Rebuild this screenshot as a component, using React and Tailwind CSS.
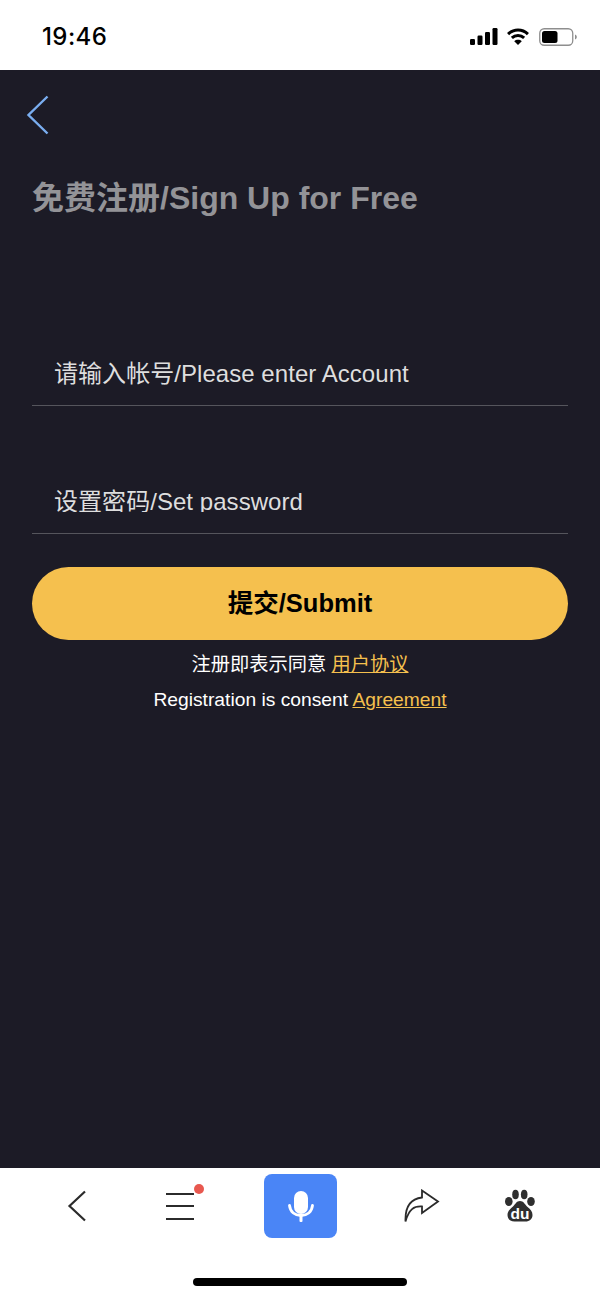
const sans = "font-['Liberation_Sans','Noto_Sans_CJK_SC',sans-serif]";

function StatusIcons() {
  return (
    <div className="flex items-center gap-[8px]">
      <svg width="28" height="17" viewBox="0 0 28 17" fill="#000">
        <rect x="0" y="11" width="5" height="6" rx="1.2" />
        <rect x="7.5" y="7.5" width="5" height="9.5" rx="1.2" />
        <rect x="15" y="4" width="5" height="13" rx="1.2" />
        <rect x="22.5" y="0" width="5" height="17" rx="1.2" />
      </svg>
      <svg width="24" height="17" viewBox="0 0 24 18" fill="none" stroke="#000" strokeWidth="3.2">
        <path d="M1.5 6.5C7.5 .8 16.5 .8 22.5 6.5" />
        <path d="M5.5 10.5C9.2 7 14.8 7 18.5 10.5" />
        <path d="M12 18l-4-4c2.2-2 5.800-2 8 0z" fill="#000" stroke="none" />
      </svg>
      <svg width="38" height="18" viewBox="0 0 38 18" className="ml-[1px]">
        <rect x="0.75" y="0.75" width="33" height="16.5" rx="4.5" fill="none" stroke="#8e8e8e" strokeWidth="1.3" />
        <rect x="3" y="3" width="15.5" height="12" rx="2.5" fill="#000" />
        <path d="M36 6.5c1.300.4 1.800 1.300 1.800 2.500s-.5 2.100-1.800 2.500z" fill="#8e8e8e" />
      </svg>
    </div>
  );
}

function BottomBar() {
  return (
    <div className="h-[131px] bg-white shrink-0 flex flex-col items-center">
      <div className="w-full h-[78px] flex items-center pb-[2px]">
        <div className="w-[87px] flex justify-end shrink-0">
          <svg width="20" height="32" viewBox="0 0 20 32" fill="none" stroke="#2b2b2b" strokeWidth="2.2">
            <path d="M18 1.500 2.500 16 18 30.500" />
          </svg>
        </div>
        <div className="relative w-[28px] ml-[79px] flex flex-col gap-[10.5px] shrink-0">
          <div className="h-[2px] bg-[#2b2b2b]" />
          <div className="h-[2px] bg-[#2b2b2b]" />
          <div className="h-[2px] bg-[#2b2b2b]" />
          <div className="absolute right-[-10px] top-[-9px] w-[10px] h-[10px] rounded-full bg-[#e8584f]" />
        </div>
        <div className="ml-[70px] w-[73px] h-[64px] rounded-[8px] bg-[#4a85f6] flex items-center justify-center shrink-0">
          <svg width="26" height="31" viewBox="0 0 26 31" fill="#fff">
            <rect x="6" y="0" width="14" height="23" rx="7" />
            <path d="M1.500 14.500c.8 6.500 5.500 10 11.500 10s10.700-3.500 11.500-10" fill="none" stroke="#fff" strokeWidth="2.800" strokeLinecap="round" />
            <rect x="11.500" y="24" width="3" height="7" rx="1" />
          </svg>
        </div>
        <svg width="36" height="34" viewBox="0 0 36 34" fill="none" stroke="#2b2b2b" strokeWidth="1.800" className="ml-[67px] shrink-0">
          <path d="M1.500 32.500C1 20 5 10 18 8.500V1.500L34 12.500 18 24V17.500C10 17 5 20 1.500 32.500Z" strokeLinejoin="miter" />
        </svg>
        <svg width="32" height="34" viewBox="0 0 32 34" className="ml-[65px] shrink-0">
          <g fill="#2f2f2f">
            <ellipse cx="3.800" cy="12.500" rx="3.800" ry="4.500" />
            <ellipse cx="10.500" cy="5.500" rx="3.300" ry="4.700" />
            <ellipse cx="19.200" cy="5.500" rx="3.300" ry="4.700" />
            <ellipse cx="26" cy="12.500" rx="3.800" ry="4.500" />
            <path d="M15 12c3.500 0 4.500 3 7 5.500 3.500 3 5.500 5 5.500 8.500 0 4-3 6.500-7 6.500H9.500c-4 0-7-2.500-7-6.500 0-3.500 2-5.500 5.500-8.500 2.500-2.500 3.500-5.500 7-5.500Z" />
          </g>
          <text x="15" y="29.500" textAnchor="middle" fontSize="15.500" fontWeight="700" fill="#fff" fontFamily="'Liberation Sans',sans-serif">du</text>
        </svg>
      </div>
      <div className="mt-[32px] w-[214px] h-[8px] rounded-full bg-black" />
    </div>
  );
}

export default function App() {
  return (
    <div className={`${sans} w-[600px] h-[1299px] flex flex-col bg-white overflow-hidden`}>
      <div className="h-[70px] shrink-0 bg-white flex items-center justify-between pl-[42px] pr-[23px] pt-[3px]">
        <span className="font-['Inter',sans-serif] font-medium text-[24px] leading-none text-black tracking-[0.4px]">19:46</span>
        <StatusIcons />
      </div>
      <div className="flex-1 bg-[#1c1b26] flex flex-col px-[32px]">
        <div className="pt-[26px] -ml-[6px]">
          <svg width="24" height="40" viewBox="0 0 24 40" fill="none" stroke="#7aaef0" strokeWidth="2.400" className="-mt-[1px]">
            <path d="M21.500 1.500 2.500 20l19 18.500" />
          </svg>
        </div>
        <h1 className="mt-[41px] text-[32px] leading-[44px] font-bold text-[#939397] whitespace-nowrap">免费注册/Sign Up for Free</h1>
        <div className="mt-[117px] h-[69px] border-b border-[#55555c] pl-[22px] pt-[19px]">
          <div className="text-[24px] leading-[36px] tracking-[0.05px] text-[#dedede] whitespace-nowrap">请输入帐号/Please enter Account</div>
        </div>
        <div className="mt-[59px] h-[69px] border-b border-[#55555c] pl-[22px] pt-[19px]">
          <div className="h-[28px] overflow-hidden text-[24px] leading-[36px] tracking-[0.05px] text-[#dedede] whitespace-nowrap">设置密码/Set password</div>
        </div>
        <button className="mt-[33px] h-[73px] rounded-full bg-[#f5c04e] text-black font-bold text-[25.5px] flex items-center justify-center">
          提交/Submit
        </button>
        <div className="mt-[7px] text-center text-white text-[19.25px] leading-[35px]">
          <div>注册即表示同意 <span className="text-[#f5c04e] underline">用户协议</span></div>
          <div>Registration is consent <span className="text-[#f5c04e] underline">Agreement</span></div>
        </div>
      </div>
      <BottomBar />
    </div>
  );
}
